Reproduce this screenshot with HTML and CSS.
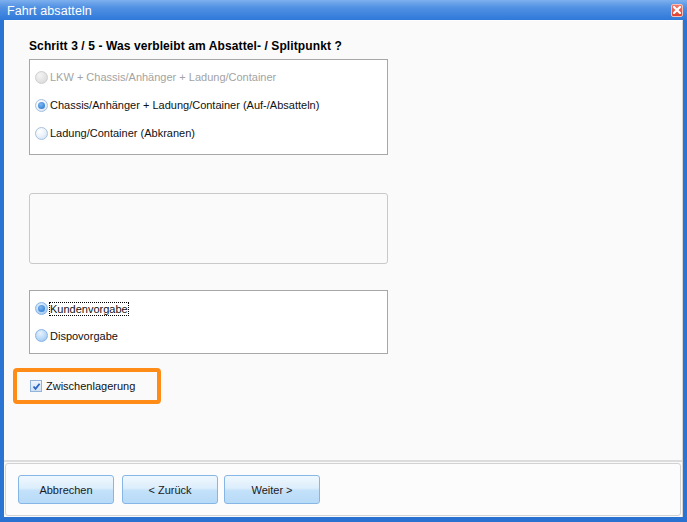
FILE: index.html
```html
<!DOCTYPE html>
<html>
<head>
<meta charset="utf-8">
<link rel="stylesheet" href="styles.css">
</head>
<body>
<div class="window">
  <div class="titlebar">
    <span class="title">Fahrt absatteln</span>
    <span class="close"><svg width="8" height="8" viewBox="0 0 8 8"><path d="M1 1L7 7M7 1L1 7" stroke="#fff" stroke-width="2.2" stroke-linecap="square"/></svg></span>
  </div>
  <div class="frame">
    <div class="content">
      <div class="heading">Schritt 3 / 5 - Was verbleibt am Absattel- / Splitpunkt ?</div>
      <div class="group group1">
        <div class="row disabled"><span class="radio radio-disabled"></span><span>LKW + Chassis/Anhänger + Ladung/Container</span></div>
        <div class="row"><span class="radio radio-checked"></span><span>Chassis/Anhänger + Ladung/Container (Auf-/Absatteln)</span></div>
        <div class="row"><span class="radio"></span><span>Ladung/Container (Abkranen)</span></div>
      </div>
      <div class="emptybox"></div>
      <div class="group group3">
        <div class="row row27"><span class="radio radio-blue radio-checked"></span><span class="focus">Kundenvorgabe</span></div>
        <div class="row row27"><span class="radio radio-blue"></span><span>Dispovorgabe</span></div>
      </div>
      <div class="highlight">
        <span class="check"><svg width="9" height="9" viewBox="0 0 9 9"><path d="M1.5 4.5L3.5 6.8L7.6 1.8" fill="none" stroke="#2b64c4" stroke-width="1.8"/></svg></span>
        <span>Zwischenlagerung</span>
      </div>
    </div>
    <div class="footer">
      <div class="footpanel">
        <button class="btn">Abbrechen</button>
        <button class="btn btn-back">&lt; Zurück</button>
        <button class="btn btn-next">Weiter &gt;</button>
      </div>
    </div>
  </div>
</div>
</body>
</html>
```
FILE: styles.css
```css
* { box-sizing: border-box; }
html, body { margin: 0; padding: 0; }
body {
  width: 687px;
  height: 522px;
  overflow: hidden;
  font-family: "Liberation Sans", Arial, sans-serif;
  font-size: 11px;
  color: #111;
}
.window {
  width: 687px;
  height: 522px;
  display: flex;
  flex-direction: column;
  background: #2f7ad9;
  border-left: 4px solid #2a74d4;
  border-right: 4px solid #2a74d4;
  border-bottom: 5px solid #2a72d2;
}
.titlebar {
  height: 20px;
  margin: 0 -4px;
  padding: 0 4px 0 7px;
  display: flex;
  align-items: center;
  justify-content: space-between;
  background: linear-gradient(#7eb0ee 0%, #5392e4 35%, #2f79d8 100%);
}
.title {
  color: #fff;
  font-size: 12.5px;
  letter-spacing: 0.1px;
  padding-top: 1px;
}
.close {
  width: 12px;
  height: 13px;
  display: flex;
  align-items: center;
  justify-content: center;
  background: linear-gradient(#f27a6e, #e0412f);
  border: 1px solid #f4c0b8;
  border-radius: 2px;
}
.frame {
  flex: 1;
  display: flex;
  flex-direction: column;
  background: #fafafa;
  border-top: 1px solid #fdfdfd;
  border-right: 1px solid #d6d6d6;
}
.content {
  flex: 1;
  padding: 18px 0 0 25px;
  display: flex;
  flex-direction: column;
  align-items: flex-start;
}
.heading {
  font-weight: bold;
  font-size: 12px;
  letter-spacing: 0.1px;
  line-height: 14px;
  color: #000;
  margin-bottom: 6px;
}
.group {
  width: 359px;
  background: #fff;
  border: 1px solid #a7a7a7;
}
.group1 {
  height: 96px;
  padding-top: 3px;
}
.row {
  height: 28px;
  display: flex;
  align-items: center;
  padding-left: 5px;
  gap: 2px;
  color: #111;
}
.row27 { height: 27px; }
.disabled { color: #a3a3a3; }
.radio {
  width: 13px;
  height: 13px;
  border-radius: 50%;
  border: 1px solid #a8c0dc;
  background: radial-gradient(circle at 35% 30%, #ffffff 0%, #eef4fb 45%, #c9dcf1 100%);
  display: flex;
  align-items: center;
  justify-content: center;
  flex: none;
}
.radio-disabled {
  border-color: #cfcfcf;
  background: radial-gradient(circle at 35% 30%, #f4f4f4 0%, #e2e2e2 60%, #d4d4d4 100%);
}
.radio-blue {
  border-color: #88b4e4;
  background: radial-gradient(circle at 40% 30%, #e8f3fe 0%, #b6d6f6 60%, #8cbcee 100%);
}
.radio-checked::after {
  content: "";
  width: 7px;
  height: 7px;
  border-radius: 50%;
  background: radial-gradient(circle at 40% 35%, #7fb6ef 0%, #3a86d8 70%, #2f73c4 100%);
}
.focus {
  outline: 1px dotted #000;
  outline-offset: 0;
  line-height: 12px;
}
.emptybox {
  width: 359px;
  height: 71px;
  margin-top: 38px;
  border: 1px solid #c9c9c9;
  border-radius: 3px;
  background: #fafafa;
}
.group3 {
  margin-top: 26px;
  height: 64px;
  padding-top: 4px;
}
.highlight {
  margin-top: 14px;
  margin-left: -16px;
  width: 148px;
  height: 36px;
  border: 4px solid #ff8c17;
  border-radius: 4px;
  display: flex;
  align-items: center;
  padding-left: 13px;
  gap: 4px;
  color: #111;
}
.check {
  width: 12px;
  height: 12px;
  border: 1px solid #94b3d8;
  background: linear-gradient(#eef5fd, #cfe1f5);
  display: flex;
  align-items: center;
  justify-content: center;
}
.footer {
  height: 57px;
  border-top: 2px solid #dcdcdc;
  padding: 1px;
  background: #fafafa;
}
.footpanel {
  height: 100%;
  border: 1px solid #d2d2d2;
  border-radius: 3px;
  background: #fcfcfc;
  display: flex;
  align-items: center;
  padding-left: 12px;
  gap: 8px;
}
.btn {
  width: 96px;
  height: 29px;
  margin: 0;
  font-family: "Liberation Sans", Arial, sans-serif;
  font-size: 11px;
  color: #1a1a1a;
  border: 1px solid #86b6e6;
  border-radius: 3px;
  background: linear-gradient(#f0f8fe 0%, #dcedfc 45%, #c2e0f9 55%, #b8dbf8 100%);
  padding: 0;
}
.btn-next { margin-left: -2px; }
```
